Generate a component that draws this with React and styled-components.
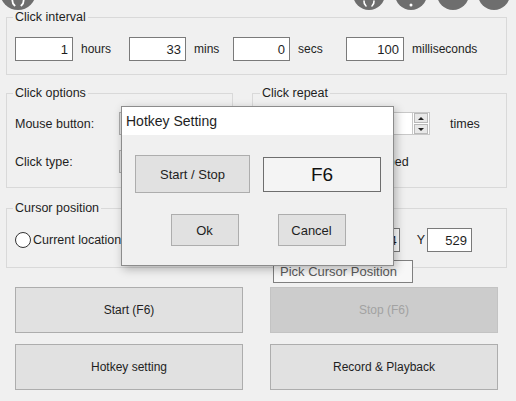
import React from 'react';
import styled, { createGlobalStyle } from 'styled-components';

const GlobalStyle = createGlobalStyle`
  html, body {
    margin: 0;
    padding: 0;
    background: #f0f0f0;
  }
  body {
    font-family: "Liberation Sans", Arial, sans-serif;
    color: #1e1e1e;
  }
  * {
    box-sizing: border-box;
  }
`;

const Page = styled.div`
  position: relative;
  width: 516px;
  height: 401px;
  overflow: hidden;
  padding: 10px 9px 0 6px;
  background: #f0f0f0;
`;

const GroupBox = styled.fieldset`
  margin: ${({ $mt }) => $mt || 0}px 0 0;
  padding: ${({ $pad }) => $pad};
  border: 1px solid #d9d9d9;
  min-width: 0;
`;

const Legend = styled.legend`
  padding: 0 2px;
  margin-left: -2px;
  font-size: 12.5px;
  line-height: 14px;
`;

const IntervalRow = styled.div`
  display: grid;
  grid-template-columns: 114px 104px 113px auto;
  align-items: center;
`;

const Field = styled.div`
  display: flex;
  align-items: center;
  gap: 8px;
`;

const TextBox = styled.input`
  width: ${({ $w }) => $w}px;
  height: ${({ $h }) => $h || 24}px;
  margin: 0;
  padding: 0 ${({ $pr }) => $pr ?? 4}px 0 3px;
  background: #fff;
  border: 1px solid ${({ $soft }) => ($soft ? '#c8c8c8' : '#7a7a7a')};
  text-align: ${({ $left }) => ($left ? 'left' : 'right')};
  font-family: inherit;
  font-size: 13px;
  color: #1e1e1e;
  outline: none;
`;

const Unit = styled.span`
  font-size: ${({ $size }) => $size || 12}px;
  white-space: nowrap;
`;

const OptionsRow = styled.div`
  display: grid;
  grid-template-columns: 227px 1fr;
  gap: 19px;
  margin-top: 11px;
`;

const Stack = styled.div`
  display: flex;
  flex-direction: column;
  gap: 15px;
`;

const Line = styled.div`
  display: flex;
  align-items: center;
  height: 23px;
  padding-left: ${({ $indent }) => $indent || 0}px;
  font-size: 12.5px;
`;

const Label = styled.span`
  width: ${({ $w }) => ($w ? `${$w}px` : 'auto')};
  flex-shrink: 0;
  white-space: nowrap;
`;

const Combo = styled.div`
  width: 102px;
  height: 23px;
  background: #e1e1e1;
  border: 1px solid #adadad;
  padding-left: 4px;
  line-height: 21px;
  font-size: 12.5px;
`;

const Radio = styled.span`
  width: 16px;
  height: 16px;
  flex-shrink: 0;
  border-radius: 50%;
  border: 1px solid #333;
  background: #fff;
  margin-right: 2px;
`;

const Spin = styled.div`
  display: flex;
  flex-direction: column;
  width: 17px;
  height: 23px;
  border: 1px solid #c8c8c8;
  border-left: none;
  background: #fff;
`;

const SpinButton = styled.div`
  flex: 1;
  display: flex;
  align-items: center;
  justify-content: center;
  background: #e8e8e8;
  border: 1px solid #b9b9b9;
  margin: 0 1px;
  &:first-child { margin-bottom: 1px; }
  &::after {
    content: "";
    border-left: 3px solid transparent;
    border-right: 3px solid transparent;
    ${({ $down }) => ($down ? 'border-top: 3px solid #222;' : 'border-bottom: 3px solid #222;')}
  }
`;

const CursorRow = styled.div`
  display: flex;
  align-items: center;
  height: 24px;
  font-size: 12.5px;
`;

const RightGroup = styled.div`
  margin-left: auto;
  display: flex;
  align-items: center;
`;

const AxisLabel = styled.span`
  font-size: 12.5px;
  margin: 0 ${({ $after }) => $after}px 0 ${({ $before }) => $before}px;
`;

const ButtonGrid = styled.div`
  display: grid;
  grid-template-columns: 1fr 1fr;
  column-gap: 27px;
  row-gap: 11px;
  margin: 19px 9px 0;
`;

const Button = styled.button`
  width: ${({ $w }) => ($w ? `${$w}px` : 'auto')};
  height: ${({ $h }) => $h || 46}px;
  margin: 0;
  padding: 0;
  background: #e1e1e1;
  border: 1px solid #adadad;
  font-family: inherit;
  font-size: ${({ $size }) => $size || 12}px;
  color: #1e1e1e;
  &:disabled {
    background: #cccccc;
    border-color: #c3c3c3;
    color: #a2a2a2;
  }
`;

const Tooltip = styled.div`
  position: absolute;
  left: 273px;
  top: 260px;
  width: 140px;
  height: 23px;
  padding-left: 6px;
  background: #f7f7f7;
  border: 1px solid #7f7f7f;
  color: #5a5a5a;
  font-size: 13px;
  line-height: 21px;
  white-space: nowrap;
`;

const Dialog = styled.div`
  position: absolute;
  left: 121px;
  top: 106px;
  width: 273px;
  height: 160px;
  background: #f0f0f0;
  border: 1px solid #8c8c8c;
  box-shadow: 2px 3px 9px rgba(0, 0, 0, 0.28);
`;

const TitleBar = styled.div`
  height: 28px;
  background: #fff;
  padding-left: 4px;
  font-size: 14px;
  line-height: 28px;
`;

const DialogBody = styled.div`
  padding: 20px 12px 0 13px;
`;

const HotkeyRow = styled.div`
  display: flex;
  align-items: center;
  gap: 13px;
`;

const KeyBox = styled.div`
  width: 118px;
  height: 35px;
  background: #f4f4f4;
  border: 1px solid #6e6e6e;
  text-align: center;
  font-size: 19px;
  line-height: 33px;
  color: #111;
`;

const DialogActions = styled.div`
  display: flex;
  justify-content: center;
  gap: 39px;
  margin-top: 21px;
`;

const Bubble = styled.svg`
  position: absolute;
  top: ${({ $top }) => $top}px;
  left: ${({ $left }) => $left}px;
`;

const CircleButton = ({ left, top, size, glyph }) => (
  <Bubble $left={left} $top={top} width={size} height={size} viewBox="0 0 32 32">
    <circle cx="16" cy="16" r="16" fill="#6e6e6e" />
    {glyph === 'arcs' && (
      <g fill="none" stroke="#fff" strokeWidth="1.6" strokeLinecap="round">
        <path d="M11 23 a6 6 0 0 0 2 5" />
        <path d="M21 23 a6 6 0 0 1 -2 5" />
      </g>
    )}
    {glyph === 'dot' && <circle cx="16" cy="27" r="1.5" fill="#fff" />}
  </Bubble>
);

const App = () => (
  <>
    <GlobalStyle />
    <Page>
      <GroupBox $pad="13px 8px 13px 8px">
        <Legend>Click interval</Legend>
        <IntervalRow>
          <Field>
            <TextBox $w={58} defaultValue="1" readOnly />
            <Unit>hours</Unit>
          </Field>
          <Field>
            <TextBox $w={57} defaultValue="33" readOnly />
            <Unit>mins</Unit>
          </Field>
          <Field>
            <TextBox $w={57} defaultValue="0" readOnly />
            <Unit>secs</Unit>
          </Field>
          <Field>
            <TextBox $w={58} defaultValue="100" readOnly />
            <Unit>milliseconds</Unit>
          </Field>
        </IntervalRow>
      </GroupBox>

      <OptionsRow>
        <GroupBox $pad="12px 8px 14px 8px">
          <Legend>Click options</Legend>
          <Stack>
            <Line>
              <Label $w={104}>Mouse button:</Label>
              <Combo>Left</Combo>
            </Line>
            <Line>
              <Label $w={104}>Click type:</Label>
              <Combo>Single</Combo>
            </Line>
          </Stack>
        </GroupBox>
        <GroupBox $pad="12px 8px 14px 9px">
          <Legend>Click repeat</Legend>
          <Stack>
            <Line>
              <Radio />
              <Label $w={55}>Repeat</Label>
              <TextBox $w={78} $h={23} $left $soft defaultValue="1" readOnly />
              <Spin>
                <SpinButton />
                <SpinButton $down />
              </Spin>
              <Unit $size={12.5} style={{ marginLeft: 20 }}>times</Unit>
            </Line>
            <Line $indent={14}>
              <Radio />
              <Label>Repeat until stopped</Label>
            </Line>
          </Stack>
        </GroupBox>
      </OptionsRow>

      <GroupBox $mt={13} $pad="13px 34px 15px 8px">
        <Legend>Cursor position</Legend>
        <CursorRow>
          <Radio />
          <Label>Current location</Label>
          <RightGroup>
            <Radio />
            <Button $w={90} $h={24}>Pick location</Button>
            <AxisLabel $before={18} $after={5}>X</AxisLabel>
            <TextBox $w={45} $pr={2} defaultValue="1224" readOnly />
            <AxisLabel $before={17} $after={2}>Y</AxisLabel>
            <TextBox $w={45} defaultValue="529" readOnly />
          </RightGroup>
        </CursorRow>
      </GroupBox>

      <ButtonGrid>
        <Button>Start (F6)</Button>
        <Button disabled>Stop (F6)</Button>
        <Button>Hotkey setting</Button>
        <Button>Record &amp; Playback</Button>
      </ButtonGrid>

      <Tooltip>Pick Cursor Position</Tooltip>

      <Dialog>
        <TitleBar>Hotkey Setting</TitleBar>
        <DialogBody>
          <HotkeyRow>
            <Button $w={115} $h={38} $size={13}>Start / Stop</Button>
            <KeyBox>F6</KeyBox>
          </HotkeyRow>
          <DialogActions>
            <Button $w={68} $h={32} $size={13}>Ok</Button>
            <Button $w={68} $h={32} $size={13}>Cancel</Button>
          </DialogActions>
        </DialogBody>
      </Dialog>

      <CircleButton left={0} top={-26} size={36} glyph="arcs" />
      <CircleButton left={353} top={-22} size={32} glyph="arcs" />
      <CircleButton left={395} top={-22} size={32} glyph="dot" />
      <CircleButton left={437} top={-22} size={32} />
      <CircleButton left={478} top={-22} size={32} />
    </Page>
  </>
);

export default App;
